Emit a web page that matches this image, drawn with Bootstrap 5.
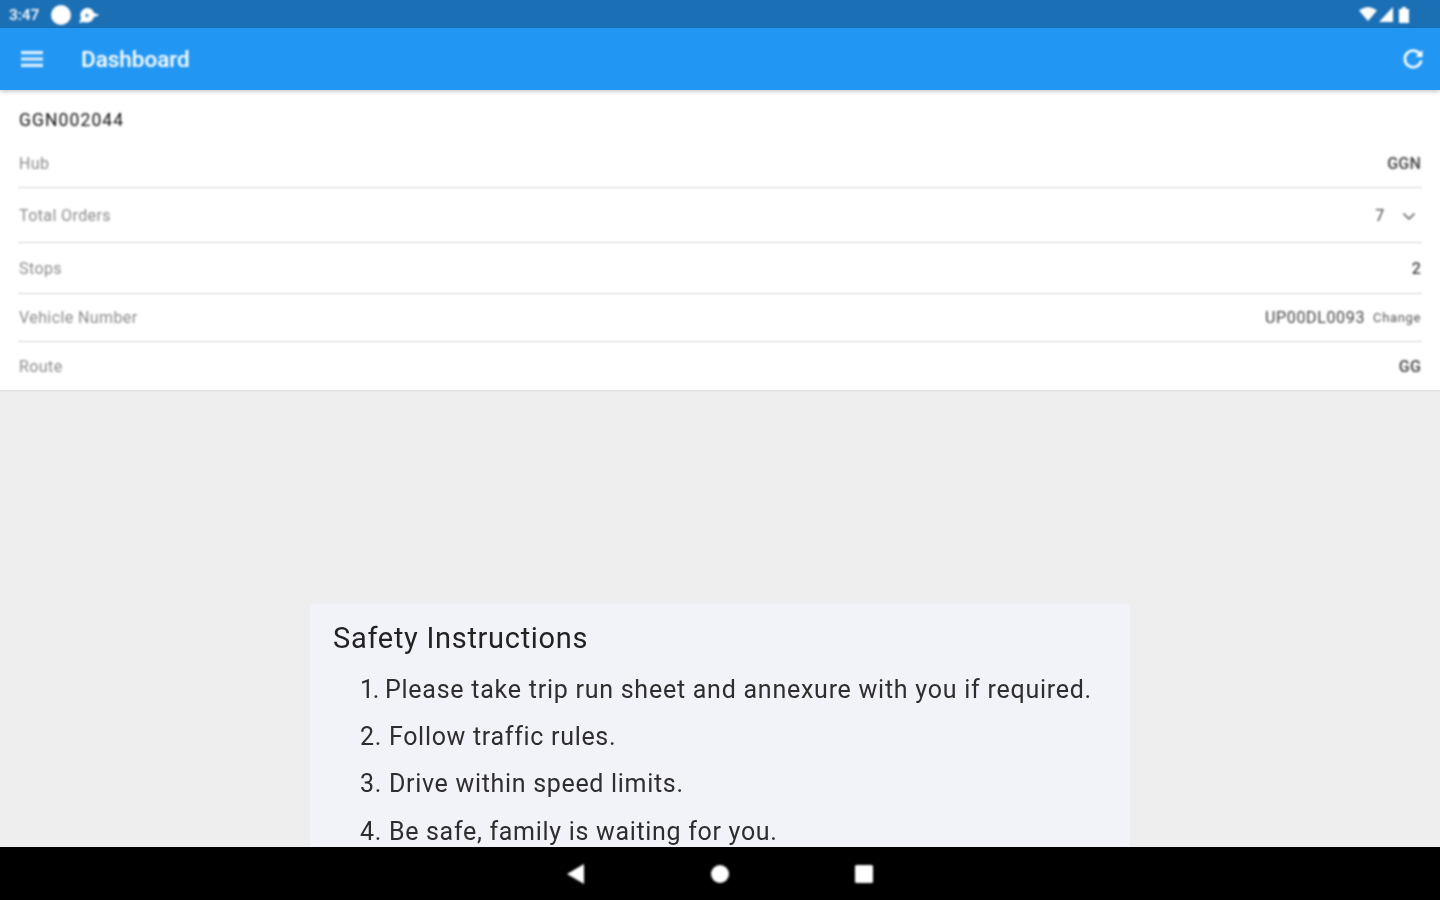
<!DOCTYPE html>
<html lang="en">
<head>
<meta charset="utf-8">
<title>Dashboard</title>
<link href="https://cdn.jsdelivr.net/npm/bootstrap@5.3.0/dist/css/bootstrap.min.css" rel="stylesheet">
<style>
html,body{height:900px;overflow:hidden}
body{font-family:Roboto,"Liberation Sans",sans-serif;background:#eeeeee}
.screen-wrap{height:900px}
.status-strip>span,.status-strip svg,.app-strip svg,.app-title,.panel-id,.line-key,.line-val,.change-txt,.nav-strip svg{filter:blur(.8px)}
.notice h5,.notice li{filter:blur(.5px)}
.status-strip{height:28px;flex:none;background:#1b6fb5;color:#fff;padding:0 30px 0 9px;font-size:15.5px;font-weight:500;letter-spacing:-.1px}
.status-time{padding-top:3px}
.app-strip{height:62px;flex:none;background:#2196f3;color:#fff;padding:0 15px 0 20px;box-shadow:0 2px 4px rgba(0,0,0,.2);position:relative;z-index:2}
.app-title{font-size:22.5px;font-weight:500;margin-left:37px;letter-spacing:-.03px;padding-top:1px}
.info-panel{height:300px;flex:none;background:#fff;padding:0 18px;box-shadow:0 1px 2px rgba(0,0,0,.08)}
.panel-id{height:48px;padding-top:18px;font-size:17.5px;color:#111;line-height:24px;letter-spacing:1.1px;padding-left:1px;font-weight:400}
.info-line{font-size:16px;border-bottom:3px solid #f2f2f2;padding:0 1px}
.info-line:last-child{border-bottom:0}
.h-a{height:51px;padding-top:4px}.h-b{height:55px;padding-top:2px}.h-c{height:51px;padding-top:2px}.h-d{height:48px}.h-e{height:47px}
.line-key{color:#8b8b8b;letter-spacing:.4px}
.line-val{color:#444;font-weight:500;letter-spacing:.2px}
.line-mono{letter-spacing:.65px;font-weight:400}
.chev-gap{margin-left:17px;margin-right:5px}
.change-txt{font-size:13px;color:#555;margin-left:8px;letter-spacing:.65px}
.stage{flex:1 1 auto;min-height:0;overflow:hidden;padding-top:214px}
.notice{width:820px;height:260px;background:#f2f2f9;padding:15px 23px}
.notice h5{font-size:29px;font-weight:400;color:#222;line-height:38px;margin:0 0 9px;letter-spacing:.7px}
.notice ol{margin:0;padding:0 0 0 27px;list-style:none;color:#2e2e2e;font-size:25px;line-height:47.2px;letter-spacing:.69px}
.notice .first-item{letter-spacing:.75px}
.num-tight{letter-spacing:-1.3px}
.nav-strip{height:53px;background:#000;flex:none}
.nav-icons{gap:120px}
</style>
</head>
<body>
<div class="screen-wrap d-flex flex-column">
  <div class="status-strip d-flex align-items-center">
    <span class="status-time">3:47</span>
    <svg width="60" height="24" viewBox="0 0 60 24" fill="#fff"><circle cx="22" cy="13" r="10"/><g transform="translate(10 -.5)"><path d="M37 6.500a7.500 7.500 0 0 1 8 5l5.500 2-5.500 2A7.500 7.500 0 0 1 35 20.500l-5 1 2-4.500A7.500 7.500 0 0 1 37 6.500z"/><circle cx="38" cy="14" r="1.500" fill="#1b6fb5"/></g></svg>
    <svg class="ms-auto" width="52" height="18" viewBox="0 0 52 18" fill="#fff"><path d="M1 5.500Q10-1.500 19 5.500L10 16z"/><path d="M21 17 35 2v15z"/><path d="M41 4h3V2h4v2h3v14H41z"/></svg>
  </div>
  <div class="app-strip d-flex align-items-center">
    <svg width="24" height="24" viewBox="0 0 24 24" fill="#e3f1fd"><path d="M1 4h22v3.200H1zM1 10.400h22v3.200H1zM1 16.800h22V20H1z"/></svg>
    <span class="app-title">Dashboard</span>
    <svg class="ms-auto" width="24" height="24" viewBox="0 0 24 24" fill="none" stroke="#fff" stroke-width="2.600"><path d="M19.500 8a8.300 8.300 0 1 0 .8 5.500"/><path d="M21.500 3v7h-7z" fill="#fff" stroke="none"/></svg>
  </div>
  <div class="info-panel">
    <div class="panel-id">GGN002044</div>
    <div class="info-line h-a d-flex justify-content-between align-items-center"><span class="line-key">Hub</span><span class="line-val">GGN</span></div>
    <div class="info-line h-b d-flex justify-content-between align-items-center"><span class="line-key">Total Orders</span><span class="line-val d-flex align-items-center line-mono">7<svg class="chev-gap" width="14" height="14" viewBox="0 0 14 14" fill="none" stroke="#555" stroke-width="1.500"><path d="M1.500 4.500 7 10l5.500-5.500"/></svg></span></div>
    <div class="info-line h-c d-flex justify-content-between align-items-center"><span class="line-key">Stops</span><span class="line-val">2</span></div>
    <div class="info-line h-d d-flex justify-content-between align-items-center"><span class="line-key">Vehicle Number</span><span class="d-flex align-items-center"><span class="line-val line-mono">UP00DL0093</span><span class="change-txt">Change</span></span></div>
    <div class="info-line h-e d-flex justify-content-between align-items-center"><span class="line-key">Route</span><span class="line-val">GG</span></div>
  </div>
  <div class="stage d-flex justify-content-center">
    <div class="notice">
      <h5>Safety Instructions</h5>
      <ol>
        <li class="first-item"><span class="num-tight">1.</span> Please take trip run sheet and annexure with you if required.</li>
        <li>2. Follow traffic rules.</li>
        <li>3. Drive within speed limits.</li>
        <li>4. Be safe, family is waiting for you.</li>
      </ol>
    </div>
  </div>
  <div class="nav-strip d-flex align-items-center justify-content-center nav-icons">
    <svg width="24" height="24" viewBox="0 0 24 24" fill="#fff"><path d="M3 12 20 2v20z"/></svg>
    <svg width="24" height="24" viewBox="0 0 24 24" fill="#fff"><circle cx="12" cy="12" r="9"/></svg>
    <svg width="24" height="24" viewBox="0 0 24 24" fill="#fff"><rect x="3" y="3" width="18" height="18" rx="1.500"/></svg>
  </div>
</div>
<script src="https://cdn.jsdelivr.net/npm/bootstrap@5.3.0/dist/js/bootstrap.bundle.min.js"></script>
</body>
</html>
